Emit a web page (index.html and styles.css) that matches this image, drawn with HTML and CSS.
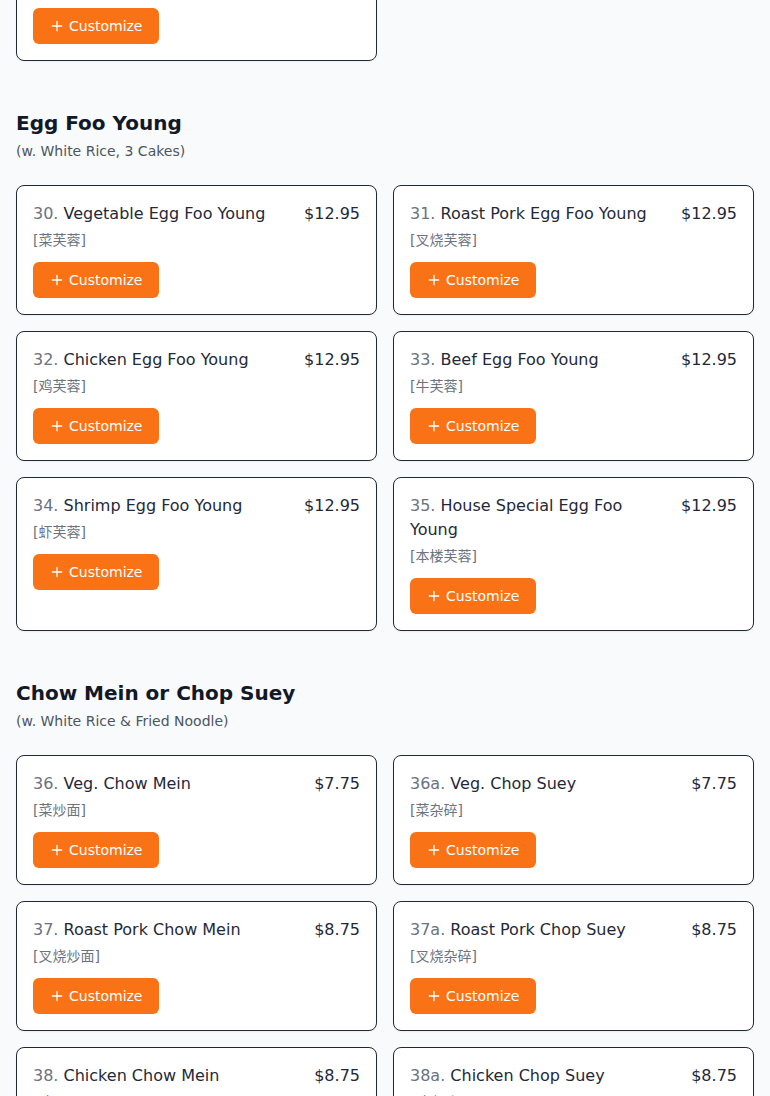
FILE: index.html
```html
<!DOCTYPE html>
<html lang="en">
<head>
<meta charset="utf-8">
<title>Menu</title>
<link rel="stylesheet" href="styles.css">
</head>
<body>
<main class="menu">
  <section class="section section-scrolled">
    <div class="grid">
      <div class="card">
        <div class="card-head">
          <div class="name"><span class="num">29.</span> House Special Fried Rice</div>
          <div class="price">$9.95</div>
        </div>
        <div class="cn">本楼炒饭</div>
        <button class="btn"><svg class="plus" viewBox="0 0 24 24"><path d="M5 12h14M12 5v14"/></svg>Customize</button>
      </div>
    </div>
  </section>

  <section class="section">
    <h2 class="title">Egg Foo Young</h2>
    <p class="sub">(w. White Rice, 3 Cakes)</p>
    <div class="grid">
      <div class="card">
        <div class="card-head">
          <div class="name"><span class="num">30.</span> Vegetable Egg Foo Young</div>
          <div class="price">$12.95</div>
        </div>
        <div class="cn">菜芙蓉</div>
        <button class="btn"><svg class="plus" viewBox="0 0 24 24"><path d="M5 12h14M12 5v14"/></svg>Customize</button>
      </div>
      <div class="card">
        <div class="card-head">
          <div class="name"><span class="num">31.</span> Roast Pork Egg Foo Young</div>
          <div class="price">$12.95</div>
        </div>
        <div class="cn">叉烧芙蓉</div>
        <button class="btn"><svg class="plus" viewBox="0 0 24 24"><path d="M5 12h14M12 5v14"/></svg>Customize</button>
      </div>
      <div class="card">
        <div class="card-head">
          <div class="name"><span class="num">32.</span> Chicken Egg Foo Young</div>
          <div class="price">$12.95</div>
        </div>
        <div class="cn">鸡芙蓉</div>
        <button class="btn"><svg class="plus" viewBox="0 0 24 24"><path d="M5 12h14M12 5v14"/></svg>Customize</button>
      </div>
      <div class="card">
        <div class="card-head">
          <div class="name"><span class="num">33.</span> Beef Egg Foo Young</div>
          <div class="price">$12.95</div>
        </div>
        <div class="cn">牛芙蓉</div>
        <button class="btn"><svg class="plus" viewBox="0 0 24 24"><path d="M5 12h14M12 5v14"/></svg>Customize</button>
      </div>
      <div class="card">
        <div class="card-head">
          <div class="name"><span class="num">34.</span> Shrimp Egg Foo Young</div>
          <div class="price">$12.95</div>
        </div>
        <div class="cn">虾芙蓉</div>
        <button class="btn"><svg class="plus" viewBox="0 0 24 24"><path d="M5 12h14M12 5v14"/></svg>Customize</button>
      </div>
      <div class="card">
        <div class="card-head">
          <div class="name"><span class="num">35.</span> House Special Egg Foo Young</div>
          <div class="price">$12.95</div>
        </div>
        <div class="cn">本楼芙蓉</div>
        <button class="btn"><svg class="plus" viewBox="0 0 24 24"><path d="M5 12h14M12 5v14"/></svg>Customize</button>
      </div>
    </div>
  </section>

  <section class="section">
    <h2 class="title">Chow Mein or Chop Suey</h2>
    <p class="sub">(w. White Rice &amp; Fried Noodle)</p>
    <div class="grid">
      <div class="card">
        <div class="card-head">
          <div class="name"><span class="num">36.</span> Veg. Chow Mein</div>
          <div class="price">$7.75</div>
        </div>
        <div class="cn">菜炒面</div>
        <button class="btn"><svg class="plus" viewBox="0 0 24 24"><path d="M5 12h14M12 5v14"/></svg>Customize</button>
      </div>
      <div class="card">
        <div class="card-head">
          <div class="name"><span class="num">36a.</span> Veg. Chop Suey</div>
          <div class="price">$7.75</div>
        </div>
        <div class="cn">菜杂碎</div>
        <button class="btn"><svg class="plus" viewBox="0 0 24 24"><path d="M5 12h14M12 5v14"/></svg>Customize</button>
      </div>
      <div class="card">
        <div class="card-head">
          <div class="name"><span class="num">37.</span> Roast Pork Chow Mein</div>
          <div class="price">$8.75</div>
        </div>
        <div class="cn">叉烧炒面</div>
        <button class="btn"><svg class="plus" viewBox="0 0 24 24"><path d="M5 12h14M12 5v14"/></svg>Customize</button>
      </div>
      <div class="card">
        <div class="card-head">
          <div class="name"><span class="num">37a.</span> Roast Pork Chop Suey</div>
          <div class="price">$8.75</div>
        </div>
        <div class="cn">叉烧杂碎</div>
        <button class="btn"><svg class="plus" viewBox="0 0 24 24"><path d="M5 12h14M12 5v14"/></svg>Customize</button>
      </div>
      <div class="card">
        <div class="card-head">
          <div class="name"><span class="num">38.</span> Chicken Chow Mein</div>
          <div class="price">$8.75</div>
        </div>
        <div class="cn">鸡炒面</div>
        <button class="btn"><svg class="plus" viewBox="0 0 24 24"><path d="M5 12h14M12 5v14"/></svg>Customize</button>
      </div>
      <div class="card">
        <div class="card-head">
          <div class="name"><span class="num">38a.</span> Chicken Chop Suey</div>
          <div class="price">$8.75</div>
        </div>
        <div class="cn">鸡杂碎</div>
        <button class="btn"><svg class="plus" viewBox="0 0 24 24"><path d="M5 12h14M12 5v14"/></svg>Customize</button>
      </div>
    </div>
  </section>
</main>
</body>
</html>
```

FILE: styles.css
```css
html, body {
  margin: 0;
  padding: 0;
  background: #f9fafb;
  font-family: "DejaVu Sans", "Noto Sans CJK SC", sans-serif;
  color: #1f2937;
}

.menu {
  padding: 0 16px 32px;
  display: flex;
  flex-direction: column;
  gap: 48px;
  overflow: hidden;
}

.section-scrolled {
  margin-top: -69px;
}

.title {
  margin: 0;
  font-size: 20px;
  line-height: 28px;
  font-weight: 700;
  color: #111827;
}

.sub {
  margin: 4px 0 24px;
  font-size: 14px;
  line-height: 20px;
  color: #4b5563;
}

.grid {
  display: grid;
  grid-template-columns: 1fr 1fr;
  gap: 16px;
}

.card {
  background: #ffffff;
  border: 1px solid #1f2937;
  border-radius: 8px;
  padding: 16px;
  display: flex;
  flex-direction: column;
  align-items: flex-start;
  box-shadow: 0 1px 2px rgba(0, 0, 0, 0.05);
}

.card-head {
  display: flex;
  justify-content: space-between;
  align-items: flex-start;
  gap: 16px;
  width: 100%;
}

.name {
  font-size: 16px;
  line-height: 24px;
  color: #1f2937;
}

.num {
  color: #6b7280;
}

.price {
  font-size: 16px;
  line-height: 24px;
  color: #1f2937;
  white-space: nowrap;
}

.cn {
  margin-top: 4px;
  font-size: 14px;
  line-height: 20px;
  color: #6b7280;
}

.cn::before { content: "["; }
.cn::after { content: "]"; }

.btn {
  margin-top: 12px;
  display: inline-flex;
  align-items: center;
  gap: 4px;
  height: 36px;
  padding: 0 16px;
  border: none;
  border-radius: 6px;
  background: #f97316;
  color: #ffffff;
  font-family: "DejaVu Sans", sans-serif;
  font-size: 14px;
  line-height: 20px;
  cursor: pointer;
}

.plus {
  width: 16px;
  height: 16px;
  fill: none;
  stroke: #ffffff;
  stroke-width: 2;
  stroke-linecap: round;
}
```
